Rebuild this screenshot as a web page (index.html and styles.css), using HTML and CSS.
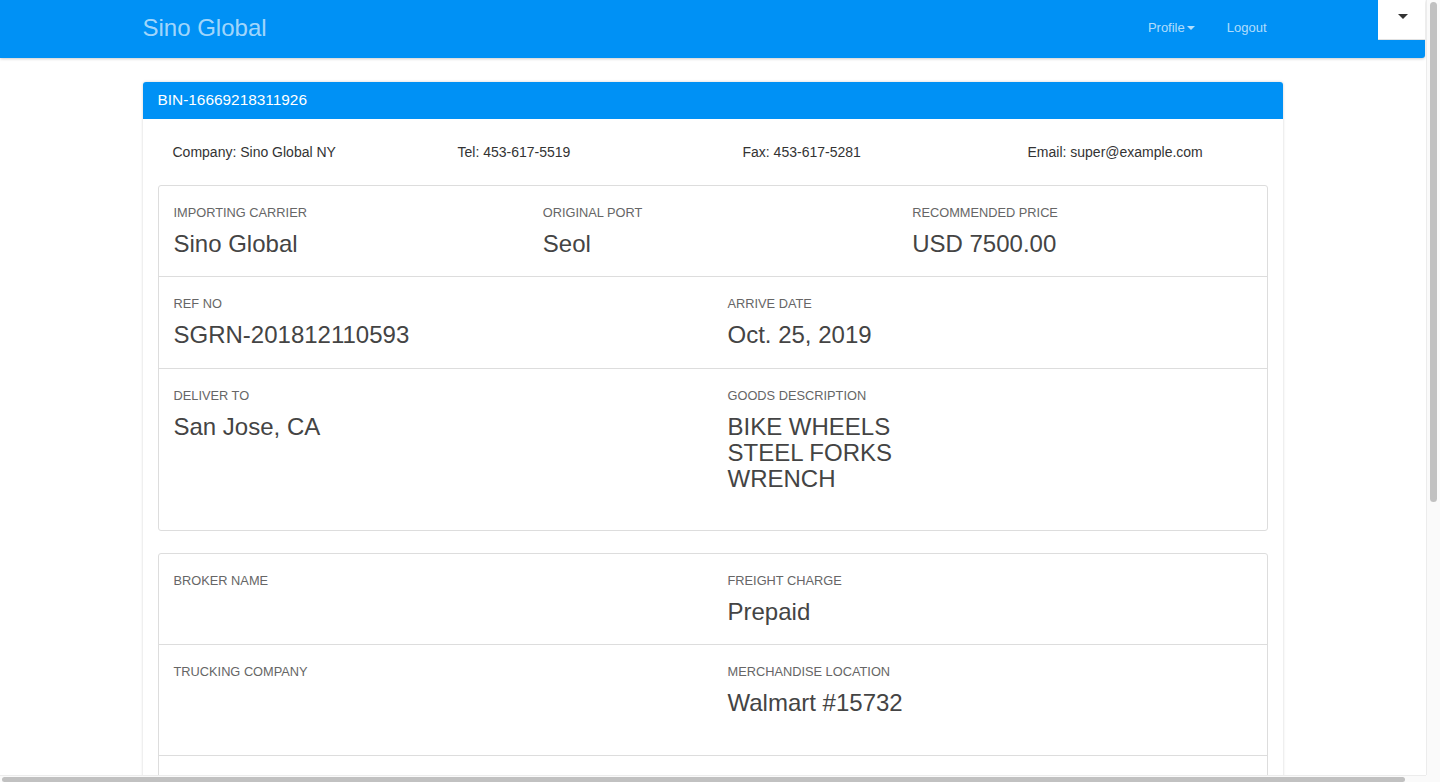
FILE: index.html
```html
<!DOCTYPE html>
<html lang="en">
  <head>
    <meta charset="UTF-8" />
    <meta name="viewport" content="width=device-width, initial-scale=1.0" />
    <title>Sino Global - BIN-16669218311926</title>
    <link rel="stylesheet" href="styles.css">
  </head>
  <body>
    <div class="window">
      <div class="page">
        <!-- Top navigation -->
        <header class="navbar">
          <div class="container nav-inner">
            <a href="#" class="brand">Sino Global</a>
            <ul class="nav-links">
              <li><a href="#">Profile<span class="caret"></span></a></li>
              <li><a href="#">Logout</a></li>
            </ul>
          </div>
          <div class="menu-toggle"><span class="caret dark"></span></div>
        </header>

        <div class="container">
          <div class="card">
            <div class="card-header">BIN-16669218311926</div>
            <div class="card-body">
              <div class="info-row">
                <span>Company: Sino Global NY</span>
                <span>Tel: 453-617-5519</span>
                <span>Fax: 453-617-5281</span>
                <span>Email: super@example.com</span>
              </div>

              <!-- Shipment details -->
              <div class="box">
                <div class="row cols-3">
                  <div class="field">
                    <div class="label">Importing Carrier</div>
                    <div class="value">Sino Global</div>
                  </div>
                  <div class="field">
                    <div class="label">Original Port</div>
                    <div class="value">Seol</div>
                  </div>
                  <div class="field">
                    <div class="label">Recommended Price</div>
                    <div class="value">USD 7500.00</div>
                  </div>
                </div>
                <div class="row cols-2">
                  <div class="field">
                    <div class="label">Ref No</div>
                    <div class="value">SGRN-201812110593</div>
                  </div>
                  <div class="field">
                    <div class="label">Arrive Date</div>
                    <div class="value">Oct. 25, 2019</div>
                  </div>
                </div>
                <div class="row cols-2 tall">
                  <div class="field">
                    <div class="label">Deliver To</div>
                    <div class="value">San Jose, CA</div>
                  </div>
                  <div class="field">
                    <div class="label">Goods Description</div>
                    <div class="value">BIKE WHEELS<br>STEEL FORKS<br>WRENCH</div>
                  </div>
                </div>
              </div>

              <!-- Broker / trucking -->
              <div class="box">
                <div class="row cols-2">
                  <div class="field">
                    <div class="label">Broker Name</div>
                    <div class="value"></div>
                  </div>
                  <div class="field">
                    <div class="label">Freight Charge</div>
                    <div class="value">Prepaid</div>
                  </div>
                </div>
                <div class="row cols-2 tall">
                  <div class="field">
                    <div class="label">Trucking Company</div>
                    <div class="value"></div>
                  </div>
                  <div class="field">
                    <div class="label">Merchandise Location</div>
                    <div class="value">Walmart #15732</div>
                  </div>
                </div>
                <div class="row cols-2">
                  <div class="field"></div>
                  <div class="field"></div>
                </div>
              </div>
            </div>
          </div>
        </div>
      </div>

      <!-- Browser scrollbars -->
      <div class="scroll-y"><div class="thumb"></div></div>
      <div class="scroll-x"><div class="thumb"></div></div>
      <div class="scroll-corner"></div>
    </div>
  </body>
</html>
```

FILE: styles.css
```css
/* Base */
html,
body {
  margin: 0;
  height: 100%;
  overflow: hidden;
}

body {
  font-family: "Liberation Sans", Arial, sans-serif;
  font-size: 14px;
  color: #333;
  background-color: #fff;
}

a {
  text-decoration: none;
}

/* Window frame with scrollbars */
.window {
  display: grid;
  grid-template-columns: 1fr 14px;
  grid-template-rows: 1fr 7px;
  height: 782px;
}

.page {
  overflow: hidden;
  padding-right: 1px;
}

.scroll-y {
  background-color: #fafafa;
  border-left: 1px solid #ececec;
  padding: 2px 3px 0 3px;
}

.scroll-y .thumb {
  height: 500px;
  background-color: #c1c1c1;
  border-radius: 4px;
}

.scroll-x {
  background-color: #fafafa;
  border-top: 1px solid #ececec;
  padding: 1px 0 0 2px;
}

.scroll-x .thumb {
  width: 1403px;
  height: 5px;
  background-color: #c1c1c1;
  border-radius: 3px;
}

.scroll-corner {
  background-color: #fafafa;
}

/* Layout container */
.container {
  width: 1140px;
  margin: 0 auto;
}

/* Navbar */
.navbar {
  position: relative;
  background-color: #0091f5;
  height: 58px;
  border-bottom-right-radius: 3px;
  box-shadow: 0 1px 3px rgba(0, 0, 0, 0.2);
}

.nav-inner {
  display: flex;
  justify-content: space-between;
  align-items: center;
  height: 58px;
}

.brand {
  font-size: 24px;
  color: rgba(255, 255, 255, 0.65);
  margin-top: -3px;
}

.nav-links {
  display: flex;
  list-style: none;
  margin: 0;
  padding: 0;
}

.nav-links a {
  display: block;
  padding: 0 16px;
  font-size: 13px;
  color: rgba(255, 255, 255, 0.7);
  margin-top: -3px;
}

.caret {
  display: inline-block;
  width: 0;
  height: 0;
  margin-left: 2px;
  vertical-align: 2px;
  border-top: 4px solid rgba(255, 255, 255, 0.7);
  border-left: 4px solid transparent;
  border-right: 4px solid transparent;
}

.caret.dark {
  border-top: 5px solid #333;
  border-left: 5px solid transparent;
  border-right: 5px solid transparent;
}

/* Collapsed menu toggle sitting on top of the bar */
.menu-toggle {
  position: absolute;
  top: 0;
  right: 0;
  width: 47px;
  height: 40px;
  background-color: #fff;
  border-bottom: 1px solid #e2e2e2;
  display: flex;
  justify-content: center;
  padding-top: 14px;
  box-sizing: border-box;
}

/* Card */
.card {
  margin-top: 24px;
  background-color: #fff;
  border-radius: 3px;
  box-shadow: 0 0 3px rgba(0, 0, 0, 0.18);
}

.card-header {
  background-color: #0091f5;
  color: #fff;
  font-size: 15.4px;
  height: 37px;
  line-height: 36px;
  padding: 0 15px;
  border-top-left-radius: 3px;
  border-top-right-radius: 3px;
}

.card-body {
  padding: 0 15px;
}

.info-row {
  display: grid;
  grid-template-columns: 285px 285px 285px auto;
  padding: 23px 15px 23px;
  font-size: 14px;
  line-height: 20px;
}

/* Detail boxes */
.box {
  border: 1px solid #dddddd;
  border-radius: 3px;
  margin-bottom: 22px;
}

.row {
  display: grid;
  border-top: 1px solid #dddddd;
}

.row:first-child {
  border-top: none;
}

.cols-3 {
  grid-template-columns: repeat(3, 1fr);
}

.cols-2 {
  grid-template-columns: repeat(2, 1fr);
}

.field {
  padding: 17px 15px 18px;
}

.row.cols-3 + .row .field {
  padding-bottom: 19px;
}

.row.tall .field {
  padding-top: 17px;
  padding-bottom: 38px;
}

.label {
  font-size: 12.8px;
  line-height: 20px;
  text-transform: uppercase;
  color: #666;
}

.value {
  margin-top: 8px;
  min-height: 27px;
  font-size: 24px;
  line-height: 26px;
  color: #444;
}

.row .field:empty {
  min-height: 80px;
}
```
